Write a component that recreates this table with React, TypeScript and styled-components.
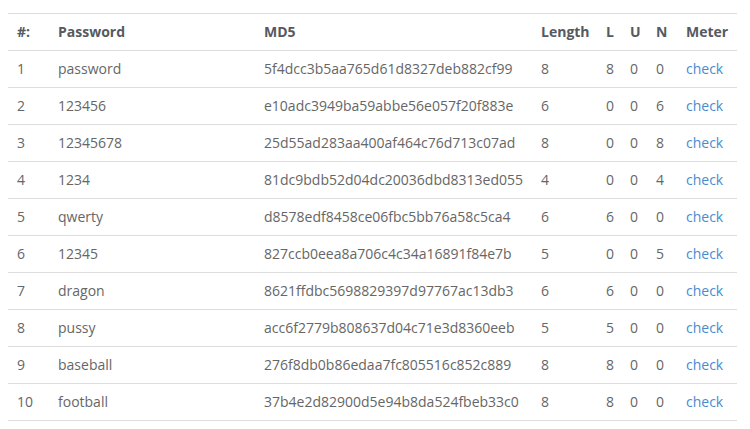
import React from "react";
import styled, { createGlobalStyle } from "styled-components";

const Global = createGlobalStyle`
  html, body { margin: 0; padding: 0; background: #fff; }
  body { font-family: "Open Sans", "DejaVu Sans", sans-serif; font-size: 14px; color: #666; }
`;

const Page = styled.div`
  padding: 13px 13px 0 8px;
`;

const Table = styled.table`
  width: 729px;
  border-collapse: collapse;
  table-layout: fixed;
  border-top: 1px solid #ddd;
`;

const Th = styled.th`
  text-align: left;
  font-weight: 700;
  color: #555a60;
  padding: 8px 8px 8px 9px;
  line-height: 20px;
  white-space: nowrap;
  border-bottom: 1px solid #ddd;
`;

const Td = styled.td`
  padding: 8px 8px 8px 9px;
  line-height: 20px;
  white-space: nowrap;
  border-bottom: 1px solid #ddd;
  color: #666;
`;

const Link = styled.a`
  color: #4a8bd0;
  text-decoration: none;
  cursor: pointer;
`;

const widths = [41, 206, 277, 65, 24, 26, 30, 60];

const rows: [string, string, number, number, number, number][] = [
  ["password", "5f4dcc3b5aa765d61d8327deb882cf99", 8, 8, 0, 0],
  ["123456", "e10adc3949ba59abbe56e057f20f883e", 6, 0, 0, 6],
  ["12345678", "25d55ad283aa400af464c76d713c07ad", 8, 0, 0, 8],
  ["1234", "81dc9bdb52d04dc20036dbd8313ed055", 4, 0, 0, 4],
  ["qwerty", "d8578edf8458ce06fbc5bb76a58c5ca4", 6, 6, 0, 0],
  ["12345", "827ccb0eea8a706c4c34a16891f84e7b", 5, 0, 0, 5],
  ["dragon", "8621ffdbc5698829397d97767ac13db3", 6, 6, 0, 0],
  ["pussy", "acc6f2779b808637d04c71e3d8360eeb", 5, 5, 0, 0],
  ["baseball", "276f8db0b86edaa7fc805516c852c889", 8, 8, 0, 0],
  ["football", "37b4e2d82900d5e94b8da524fbeb33c0", 8, 8, 0, 0],
];

export default function App() {
  return (
    <>
      <Global />
      <Page>
        <Table>
          <colgroup>
            {widths.map((w, i) => (
              <col key={i} style={{ width: w }} />
            ))}
          </colgroup>
          <thead>
            <tr>
              <Th>#:</Th>
              <Th>Password</Th>
              <Th>MD5</Th>
              <Th>Length</Th>
              <Th>L</Th>
              <Th>U</Th>
              <Th>N</Th>
              <Th>Meter</Th>
            </tr>
          </thead>
          <tbody>
            {rows.map((r, i) => (
              <tr key={i}>
                <Td>{i + 1}</Td>
                <Td>{r[0]}</Td>
                <Td>{r[1]}</Td>
                <Td>{r[2]}</Td>
                <Td>{r[3]}</Td>
                <Td>{r[4]}</Td>
                <Td>{r[5]}</Td>
                <Td>
                  <Link>check</Link>
                </Td>
              </tr>
            ))}
          </tbody>
        </Table>
      </Page>
    </>
  );
}
